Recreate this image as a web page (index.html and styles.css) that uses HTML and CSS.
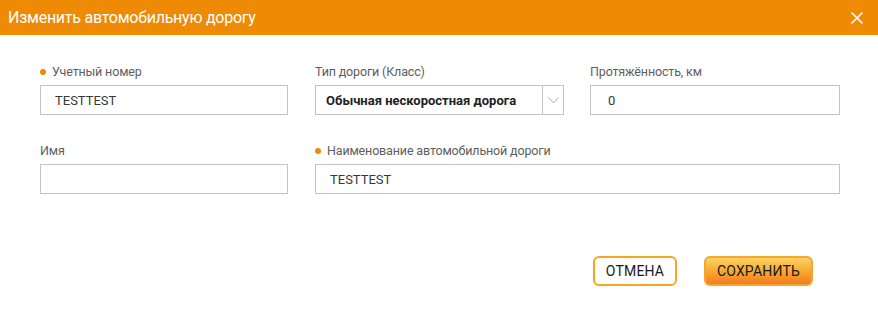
FILE: index.html
```html
<!DOCTYPE html>
<html lang="ru">
<head>
<meta charset="utf-8">
<title>Изменить автомобильную дорогу</title>
<link rel="stylesheet" href="styles.css">
</head>
<body>
<div class="dialog">
  <div class="header">
    <span class="title">Изменить автомобильную дорогу</span>
    <svg class="close" width="14" height="14" viewBox="0 0 14 14"><path d="M1.5 1.5 L12.5 12.5 M12.5 1.5 L1.5 12.5" stroke="#fff" stroke-width="1.6" fill="none"/></svg>
  </div>
  <div class="form">
    <div class="field">
      <div class="label req">Учетный номер</div>
      <div class="input pad14">TESTTEST</div>
    </div>
    <div class="field">
      <div class="label">Тип дороги (Класс)</div>
      <div class="select">
        <span class="select-text">Обычная нескоростная дорога</span>
        <span class="select-btn"><svg width="11" height="7" viewBox="0 0 11 7"><path d="M0.5 0.5 L5.5 6 L10.5 0.5" stroke="#aaa" stroke-width="1" fill="none"/></svg></span>
      </div>
    </div>
    <div class="field">
      <div class="label">Протяжённость, км</div>
      <div class="input pad17">0</div>
    </div>
    <div class="field row2">
      <div class="label">Имя</div>
      <div class="input pad14"></div>
    </div>
    <div class="field row2 span2">
      <div class="label req">Наименование автомобильной дороги</div>
      <div class="input pad14">TESTTEST</div>
    </div>
  </div>
  <div class="actions">
    <button class="btn cancel">ОТМЕНА</button>
    <button class="btn save">СОХРАНИТЬ</button>
  </div>
</div>
</body>
</html>
```
FILE: styles.css
```css
* { box-sizing: border-box; }
html, body { margin: 0; padding: 0; background: #fff; }
body { font-family: Roboto, "Noto Sans", sans-serif; color: #333; }
.dialog { width: 878px; height: 332px; }
.header {
  height: 35px;
  background: #ee8a04;
  display: flex;
  align-items: center;
  justify-content: space-between;
  padding: 0 14px 0 8px;
}
.title { color: #fff; font-size: 16px; letter-spacing: -0.25px; }
.close { display: block; }
.form {
  display: grid;
  grid-template-columns: 248px 249px 249px;
  column-gap: 27px;
  row-gap: 28px;
  padding: 29px 0 0 40px;
}
.form .field:nth-child(3) { margin-left: -1px; }
.field { display: flex; flex-direction: column; }
.span2 { grid-column: 2 / 4; }
.label {
  font-size: 12.5px;
  color: #5e5e5e;
  height: 21px;
  line-height: 15px;
  letter-spacing: -0.15px;
  display: flex;
  align-items: flex-start;
}
.label.req::before {
  content: "";
  width: 6px;
  height: 6px;
  border-radius: 50%;
  background: #ee8a04;
  margin: 5px 6px 0 0;
  flex: none;
}
.input {
  height: 30px;
  border: 1px solid #c4c4c4;
  font-size: 13px;
  color: #383838;
  display: flex;
  align-items: center;
}
.pad14 { padding-left: 14px; }
.pad17 { padding-left: 17px; }
.select {
  height: 30px;
  border: 1px solid #c4c4c4;
  display: flex;
  align-items: stretch;
}
.select-text {
  flex: 1;
  display: flex;
  align-items: center;
  padding-left: 10px;
  font-size: 13px;
  font-weight: 700;
  color: #222;
}
.select-btn {
  width: 21px;
  border-left: 1px solid #c4c4c4;
  display: flex;
  align-items: center;
  justify-content: center;
}
.actions {
  display: flex;
  justify-content: flex-end;
  gap: 27px;
  padding: 62px 65px 0 0;
}
.btn {
  height: 30px;
  border-radius: 6px;
  border: 2px solid #f5a623;
  font-family: Roboto, "Noto Sans", sans-serif;
  font-size: 14px;
  color: #1a1a1a;
  padding: 0;
  letter-spacing: 0.2px;
}
.cancel { width: 84px; background: #fff; }
.save {
  width: 109px;
  background: linear-gradient(#fcd25f, #f7a531 55%, #f47b1f);
  border-color: #f7a531;
}
```
